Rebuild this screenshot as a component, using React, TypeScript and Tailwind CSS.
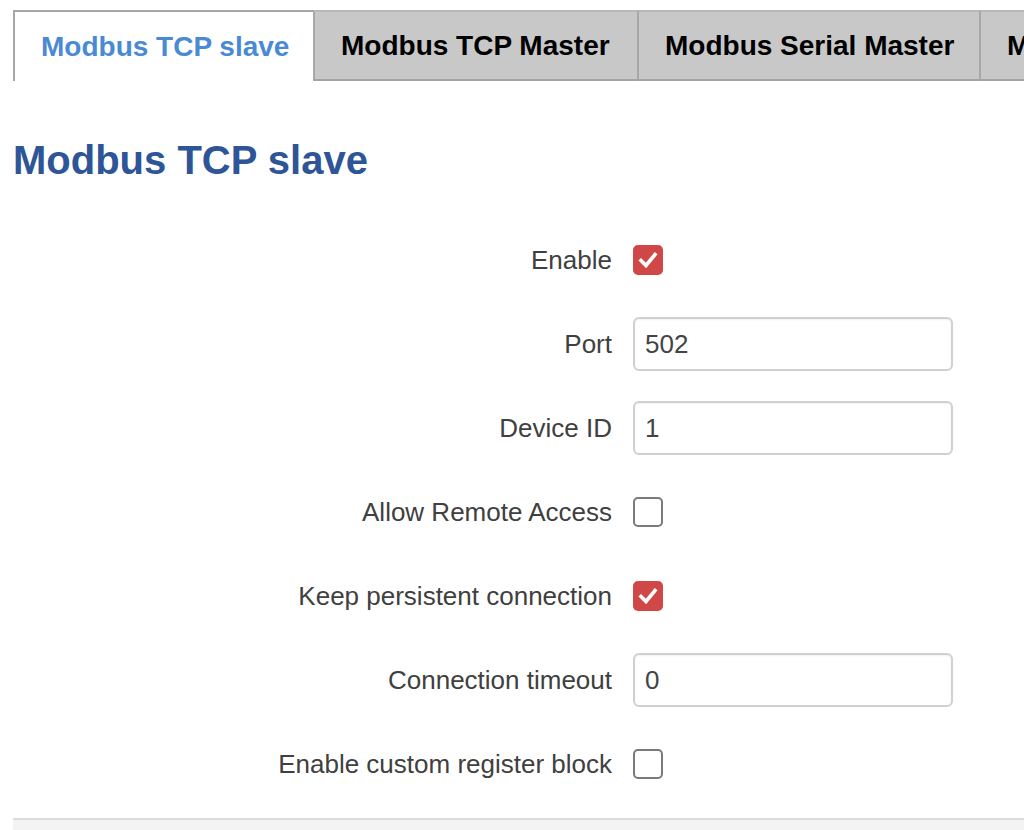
import React from "react";

const TABS: [string, string][] = [
  ["Modbus TCP slave", "w-[300px]"],
  ["Modbus TCP Master", "w-[324px]"],
  ["Modbus Serial Master", "w-[342px]"],
  ["Modbus Data to Server", "w-[320px]"],
];

type Row = { label: string; kind: "check" | "text"; value?: string; checked?: boolean };
const ROWS: Row[] = [
  { label: "Enable", kind: "check", checked: true },
  { label: "Port", kind: "text", value: "502" },
  { label: "Device ID", kind: "text", value: "1" },
  { label: "Allow Remote Access", kind: "check", checked: false },
  { label: "Keep persistent connection", kind: "check", checked: true },
  { label: "Connection timeout", kind: "text", value: "0" },
  { label: "Enable custom register block", kind: "check", checked: false },
];

const Check = ({ on }: { on?: boolean }) =>
  on ? (
    <span className="w-[30px] h-[30px] rounded-[5px] bg-[#d04747] flex items-center justify-center">
      <svg width="20" height="18" viewBox="0 0 20 18">
        <path d="M3 9.5 L8 14.5 L17 3.5" fill="none" stroke="#fff" strokeWidth="3.6" strokeLinecap="square" />
      </svg>
    </span>
  ) : (
    <span className="w-[30px] h-[30px] rounded-[5px] border-2 border-[#7a7a7a] bg-white" />
  );

export default function App() {
  return (
    <div className="w-[1024px] h-[830px] overflow-hidden bg-white pl-[13px] pt-[10px] flex flex-col" style={{ fontFamily: '"Liberation Sans", Arial, sans-serif' }}>
      {/* tabs */}
      <div className="flex h-[71px] whitespace-nowrap">
        {TABS.map(([t, w], i) => (
          <div key={t}
            className={i === 0
              ? `${w} shrink-0 pl-[26px] flex items-center bg-white border-t-2 border-l-2 border-[#a6a6a6] text-[28px] font-bold text-[#4a8ad4]`
              : `${w} shrink-0 pl-[26px] flex items-center bg-[#c8c8c8] border-t-2 border-l-2 border-b-2 border-t-[#b8b8b8] border-l-[#a8a8a8] border-b-[#a3a3a3] text-[28px] font-bold text-black`}>
            {t}
          </div>
        ))}
      </div>

      <h1 className="mt-[57px] text-[40px] leading-[44px] font-bold text-[#2d5597]">Modbus TCP slave</h1>

      <div className="mt-[36px]">
        {ROWS.map((r) => (
          <div key={r.label} className="flex items-center h-[84px]">
            <div className="w-[599px] text-right text-[26px] text-[#404040]">{r.label}</div>
            <div className="ml-[21px] flex items-center">
              {r.kind === "check" ? (
                <Check on={r.checked} />
              ) : (
                <input readOnly value={r.value}
                  className="w-[320px] h-[54px] rounded-[6px] border-2 border-[#d0d0d0] px-[10px] text-[26px] text-[#444] shadow-[inset_0_1px_2px_rgba(0,0,0,0.06)] outline-none" />
              )}
            </div>
          </div>
        ))}
      </div>

      <div className="mt-[12px] flex-1 border-t-2 border-[#dcdcdc] bg-[#f3f3f3]" />
    </div>
  );
}
